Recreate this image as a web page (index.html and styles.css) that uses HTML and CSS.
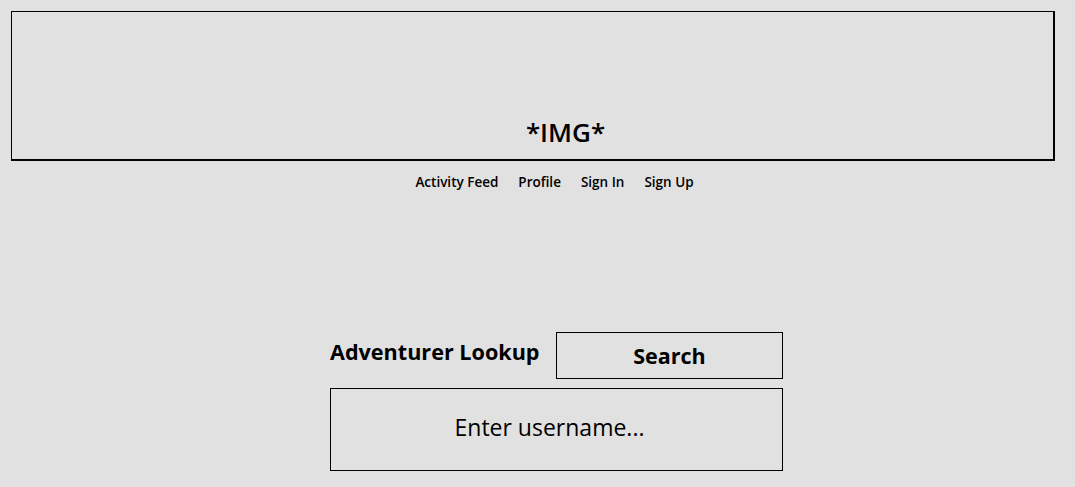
FILE: index.html
```html
<!DOCTYPE html>
<html lang="en">
<head>
  <meta charset="UTF-8">
  <meta name="viewport" content="width=device-width, initial-scale=1.0">
  <title>Adventurer Lookup</title>
  <link rel="stylesheet" href="styles.css">
</head>
<body>
  <div class="banner">
    <span class="banner-text">*IMG*</span>
  </div>

  <nav class="nav">
    <a href="#">Activity Feed</a>
    <a href="#">Profile</a>
    <a href="#">Sign In</a>
    <a href="#">Sign Up</a>
  </nav>

  <div class="lookup">
    <div class="lookup-row">
      <h2 class="lookup-title">Adventurer Lookup</h2>
      <button type="button" class="btn-search">Search</button>
    </div>
    <input type="text" class="lookup-input" placeholder="Enter username...">
  </div>
</body>
</html>
```

FILE: styles.css
```css
body {
  margin: 0;
  padding: 11px 20px 0 11px;
  background: #e1e1e1;
  font-family: "Open Sans", "Noto Sans", sans-serif;
  color: #000;
}

.banner {
  height: 147px;
  border-style: solid;
  border-color: #000;
  border-width: 1px 2px 2px 1px;
  display: flex;
  align-items: flex-end;
  justify-content: center;
}

.banner-text {
  font-size: 26px;
  font-weight: 600;
  line-height: 1;
  margin-bottom: 14px;
  margin-left: 66px;
}

.nav {
  display: flex;
  justify-content: center;
  gap: 20px;
  margin-top: 12px;
  padding-left: 43px;
}

.nav a {
  color: #000;
  text-decoration: none;
  font-size: 13.5px;
  font-weight: 600;
  line-height: 18px;
}

.lookup {
  width: 453px;
  margin: 141px 0 0 319px;
}

.lookup-row {
  display: flex;
  align-items: flex-start;
  justify-content: space-between;
}

.lookup-title {
  margin: 6px 0 0 0;
  font-size: 21.6px;
  font-weight: 700;
  line-height: 28px;
}

.btn-search {
  width: 227px;
  height: 47px;
  border: 1px solid #000;
  background: transparent;
  font-family: inherit;
  font-size: 21.5px;
  font-weight: 700;
  color: #000;
  padding: 0;
}

.lookup-input {
  display: block;
  box-sizing: border-box;
  width: 100%;
  height: 83px;
  margin-top: 9px;
  border: 1px solid #000;
  background: transparent;
  font-family: inherit;
  font-size: 23px;
  text-align: center;
  padding: 0 14px 6px 0;
}

.lookup-input::placeholder {
  color: #000;
  opacity: 1;
}
```
